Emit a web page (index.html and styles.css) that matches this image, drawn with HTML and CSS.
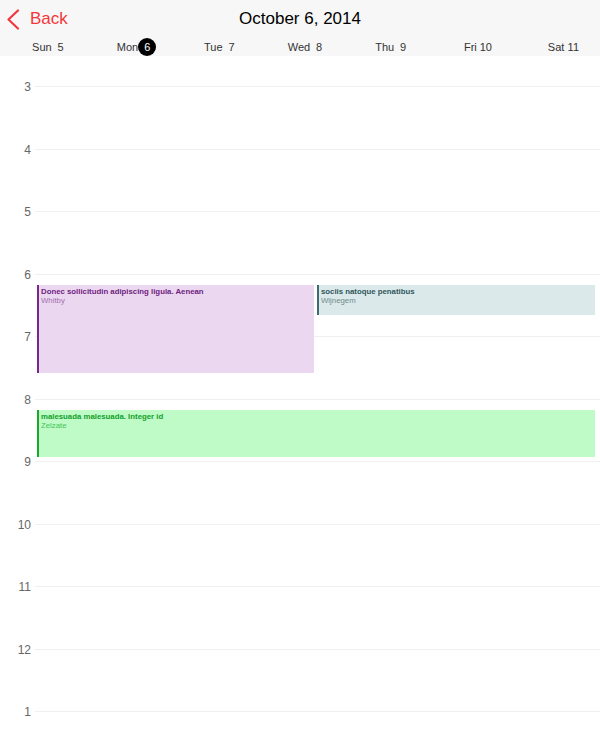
FILE: index.html
```html
<!DOCTYPE html>
<html>
<head>
<meta charset="utf-8">
<link rel="stylesheet" href="styles.css">
</head>
<body>
<header class="header">
  <div class="topbar">
    <div class="back">
      <svg class="chev" width="14" height="21" viewBox="0 0 14 21"><path d="M12 1.5 L2.5 10.5 L12 19.5" fill="none" stroke="#f2383c" stroke-width="2.2" stroke-linecap="round" stroke-linejoin="round"/></svg>
      <span class="back-text">Back</span>
    </div>
    <div class="title">October 6, 2014</div>
  </div>
  <div class="days">
    <div class="day"><span class="dname">Sun</span><span class="dnum">5</span></div>
    <div class="day"><span class="dname">Mon</span><span class="dnum today">6</span></div>
    <div class="day"><span class="dname">Tue</span><span class="dnum">7</span></div>
    <div class="day"><span class="dname">Wed</span><span class="dnum">8</span></div>
    <div class="day"><span class="dname">Thu</span><span class="dnum">9</span></div>
    <div class="day"><span class="dname">Fri</span><span class="dnum">10</span></div>
    <div class="day"><span class="dname">Sat</span><span class="dnum">11</span></div>
  </div>
</header>
<main class="main">
  <div class="timeline">
    <div class="hour"><span class="label">3</span><div class="rule"></div></div>
    <div class="hour"><span class="label">4</span><div class="rule"></div></div>
    <div class="hour"><span class="label">5</span><div class="rule"></div></div>
    <div class="hour"><span class="label">6</span><div class="rule"></div></div>
    <div class="hour"><span class="label">7</span><div class="rule"></div></div>
    <div class="hour"><span class="label">8</span><div class="rule"></div></div>
    <div class="hour"><span class="label">9</span><div class="rule"></div></div>
    <div class="hour"><span class="label">10</span><div class="rule"></div></div>
    <div class="hour"><span class="label">11</span><div class="rule"></div></div>
    <div class="hour"><span class="label">12</span><div class="rule"></div></div>
    <div class="hour"><span class="label">1</span><div class="rule"></div></div>
    <div class="events">
      <div class="event purple" style="top:199px;height:88px;left:0;width:277px;">
        <div class="ev-title">Donec sollicitudin adipiscing ligula. Aenean</div>
        <div class="ev-loc">Whitby</div>
      </div>
      <div class="event teal" style="top:199px;height:30px;left:280px;width:278px;">
        <div class="ev-title">sociis natoque penatibus</div>
        <div class="ev-loc">Wijnegem</div>
      </div>
      <div class="event green" style="top:324px;height:47px;left:0;width:558px;">
        <div class="ev-title">malesuada malesuada. Integer id</div>
        <div class="ev-loc">Zelzate</div>
      </div>
    </div>
  </div>
</main>
</body>
</html>
```
FILE: styles.css
```css
* { box-sizing: border-box; }
html, body { margin: 0; padding: 0; }
body {
  width: 600px;
  height: 731px;
  overflow: hidden;
  background: #fff;
  font-family: "Liberation Sans", Arial, sans-serif;
  color: #000;
}
.header {
  background: #f7f7f7;
  height: 56px;
  overflow: hidden;
}
.topbar {
  height: 37px;
  display: grid;
  grid-template-columns: 1fr auto 1fr;
  align-items: center;
}
.back {
  display: flex;
  align-items: center;
  padding-left: 6px;
  color: #f2383c;
}
.chev { display: block; margin-top: 1px; }
.back-text {
  font-size: 17px;
  margin-left: 10px;
}
.title {
  font-size: 17px;
  color: #000;
}
.days {
  height: 19px;
  display: grid;
  grid-template-columns: repeat(7, 85.714px);
  padding-left: 8px;
  align-items: center;
}
.day {
  display: flex;
  justify-content: center;
  align-items: center;
  font-size: 11px;
  color: #333;
}
.dnum {
  display: inline-flex;
  justify-content: center;
  align-items: center;
  width: 18px;
  height: 18px;
}
.dnum.today {
  background: #000;
  color: #fff;
  border-radius: 50%;
}
.main {
  padding-top: 30px;
  height: 675px;
  overflow: hidden;
}
.timeline {
  position: relative;
}
.hour {
  display: flex;
  height: 62.5px;
}
.label {
  width: 31px;
  text-align: right;
  font-size: 12px;
  line-height: 14px;
  height: 14px;
  margin-top: -6px;
  color: #666;
}
.rule {
  flex: 1;
  margin-left: 4px;
  border-top: 1px solid #f0f0f0;
}
.events {
  position: absolute;
  left: 37px;
  right: 5px;
  top: 0;
  bottom: 0;
}
.event {
  position: absolute;
  padding: 2px 3px 0 2px;
  border-left: 2px solid;
  overflow: hidden;
  font-size: 7.8px;
  line-height: 9px;
}
.ev-title { font-weight: bold; white-space: nowrap; }
.purple { background: #ecd7f0; border-color: #77288a; }
.purple .ev-title { color: #6c2380; }
.purple .ev-loc { color: #a070ad; }
.teal { background: #dbe9ea; border-color: #3f6a70; }
.teal .ev-title { color: #2f575c; }
.teal .ev-loc { color: #71898c; }
.green { background: #bffbc7; border-color: #16a92e; }
.green .ev-title { color: #12a02b; }
.green .ev-loc { color: #45c458; }
```
